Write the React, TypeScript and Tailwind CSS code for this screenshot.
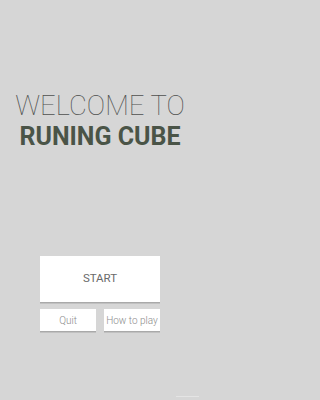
export default function App() {
  return (
    <div className="min-h-screen w-full bg-[#d6d6d6]">
      <div
        className="relative flex h-[400px] w-[200px] flex-col items-center bg-[#d6d6d6]"
        style={{ fontFamily: "Roboto, 'Liberation Sans', sans-serif" }}
      >
        {/* Title */}
        <div className="mt-[90px] flex flex-col items-center">
          <h1 className="text-[27.5px] font-thin leading-[32px] text-[#4f514f]">
            WELCOME TO
          </h1>
          <h2 className="text-[25px] font-bold leading-[30px] text-[#4a5447]">
            RUNING CUBE
          </h2>
        </div>

        {/* Menu */}
        <div className="mt-[104px] flex w-[120px] flex-col gap-[7px]">
          <button className="flex h-[46px] w-full items-center justify-center bg-white text-[11.5px] text-[#6a6a6a] shadow-[0_1.5px_0_#a9a9a9]">
            START
          </button>
          <div className="flex justify-between">
            <button className="flex h-[22px] w-[56px] items-center justify-center bg-white text-[10px] font-light text-[#8c8c8c] shadow-[0_1.5px_0_#a9a9a9]">
              Quit
            </button>
            <button className="flex h-[22px] w-[56px] items-center justify-center bg-white text-[10px] font-light text-[#8c8c8c] shadow-[0_1.5px_0_#a9a9a9]">
              How to play
            </button>
          </div>
        </div>

        {/* faint corner mark */}
        <div className="absolute bottom-[3px] right-[1px] h-[1px] w-[23px] bg-[#e4e4e4]" />
      </div>
    </div>
  );
}
